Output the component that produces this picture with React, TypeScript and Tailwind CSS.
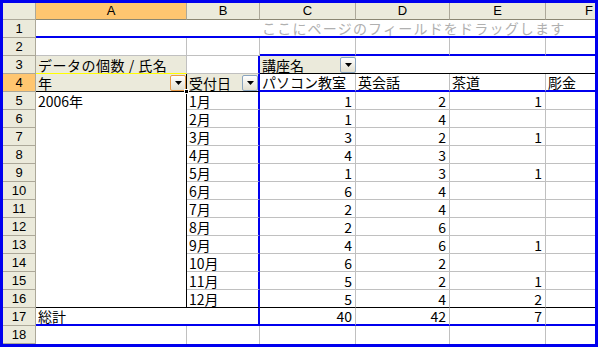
import React from "react";

const R: Record<string, string> = {
  g: "border-r border-r-[#c0c0c0]",
  n: "",
  k: "border-r border-r-black",
  u: "border-r-2 border-r-[#0000ee]",
};
const B: Record<string, string> = {
  g: "border-b border-b-[#c0c0c0]",
  n: "",
  k: "border-b border-b-black",
  u: "border-b-2 border-b-[#0000ee]",
  y: "border-b border-b-[#ffff00]",
};

type CellProps = {
  r?: string;
  b?: string;
  className?: string;
  children?: React.ReactNode;
};

function Cell({ r = "g", b = "g", className = "", children }: CellProps) {
  return (
    <div className={`flex h-full min-w-0 items-center overflow-hidden whitespace-nowrap ${R[r]} ${B[b]} ${className}`}>
      {children}
    </div>
  );
}

function RowHead({ n, active }: { n: number; active?: boolean }) {
  return (
    <div
      className={`flex h-full items-center justify-center border-r border-b border-r-[#aca899] border-b-[#aca899] text-[13px] ${
        active ? "bg-[#ffc670]" : "bg-[#ebeadb]"
      }`}
      style={{ fontFamily: '"Liberation Sans", Arial, sans-serif' }}
    >
      {n}
    </div>
  );
}

function Row({ n, active, children }: { n: number; active?: boolean; children: React.ReactNode }) {
  return (
    <div className="grid h-[18px] grid-cols-[33px_151px_73px_96px_94px_96px_49px]">
      <RowHead n={n} active={active} />
      {children}
    </div>
  );
}

function DropBtn({ hot }: { hot?: boolean }) {
  return (
    <span
      className={`flex h-[16px] w-[16px] shrink-0 items-center justify-center rounded-[2px] border bg-linear-to-b from-[#ffffff] to-[#e2dfd0] ${
        hot ? "border-[#e89a48]" : "border-[#8aa4bf]"
      }`}
    >
      <svg width="7" height="4" viewBox="0 0 7 4">
        <path d="M0 0h7L3.5 4z" fill="#000" />
      </svg>
    </span>
  );
}

const data: [string, number, number, number | null][] = [
  ["1月", 1, 2, 1],
  ["2月", 1, 4, null],
  ["3月", 3, 2, 1],
  ["4月", 4, 3, null],
  ["5月", 1, 3, 1],
  ["6月", 6, 4, null],
  ["7月", 2, 4, null],
  ["8月", 2, 6, null],
  ["9月", 4, 6, 1],
  ["10月", 6, 2, null],
  ["11月", 5, 2, 1],
  ["12月", 5, 4, 2],
];

const headers = ["A", "B", "C", "D", "E"];

export default function App() {
  return (
    <div
      className="h-[347px] w-[598px] overflow-hidden border-[3px] border-[#0000ee] bg-white text-[14px] leading-[16px] text-black"
      style={{ fontFamily: '"Noto Sans CJK JP", "Liberation Sans", sans-serif' }}
    >
      {/* column headers */}
      <div
        className="grid h-[17px] grid-cols-[33px_151px_73px_96px_94px_96px_49px] text-[13px]"
        style={{ fontFamily: '"Liberation Sans", Arial, sans-serif' }}
      >
        <div className="border-r border-b border-r-[#aca899] border-b-[#aca899] bg-[#ebeadb]" />
        {headers.map((h, i) => (
          <div
            key={h}
            className={`flex items-center justify-center border-r border-b border-r-[#aca899] border-b-[#8a8672] ${
              i === 0 ? "bg-[#ffc670]" : "bg-[#ebeadb]"
            }`}
          >
            {h}
          </div>
        ))}
        <div className="flex items-center justify-end overflow-hidden border-b border-b-[#8a8672] bg-[#ebeadb] pr-[2px]">
          F
        </div>
      </div>

      {/* page field area */}
      <Row n={1}>
        <Cell r="n" b="u" />
        <Cell r="n" b="u" />
        <div className="col-span-4 flex h-full items-center overflow-hidden whitespace-nowrap border-b-2 border-b-[#0000ee] pl-[2px] tracking-[1.2px] text-[#b0b0b0]">
          ここにページのフィールドをドラッグします
        </div>
      </Row>

      <Row n={2}>
        <Cell />
        <Cell />
        <Cell b="u" />
        <Cell b="u" />
        <Cell b="u" />
        <Cell r="n" b="u" />
      </Row>

      <Row n={3}>
        <Cell b="y" className="bg-[#ebeadb] pl-[2px] tracking-[0.5px]">
          データの個数 / 氏名
        </Cell>
        <Cell r="u" />
        <Cell r="n" b="k" className="justify-between bg-[#ebeadb] pl-[2px]">
          <span>講座名</span>
          <DropBtn />
        </Cell>
        <Cell r="n" b="k" />
        <Cell r="n" b="k" />
        <Cell r="n" b="k" />
      </Row>

      <Row n={4} active>
        <div className="relative z-10 flex h-full items-center justify-between border-r border-b border-r-black border-b-black bg-[#ebeadb] pl-[2px]">
          <span>年</span>
          <DropBtn hot />
          <span className="absolute -right-[3px] -bottom-[3px] h-[5px] w-[5px] border border-white bg-black" />
        </div>
        <Cell r="u" b="k" className="justify-between bg-[#ebeadb] pl-[2px]">
          <span>受付日</span>
          <DropBtn />
        </Cell>
        <Cell b="u" className="pl-[2px]">パソコン教室</Cell>
        <Cell b="u" className="pl-[2px]">英会話</Cell>
        <Cell b="u" className="pl-[2px]">茶道</Cell>
        <Cell r="n" b="u" className="pl-[2px]">彫金</Cell>
      </Row>

      {data.map(([m, c, d, e], i) => {
        const last = i === data.length - 1;
        const b = last ? "k" : "g";
        return (
          <Row key={m} n={5 + i}>
            <Cell r="k" b={last ? "k" : "n"} className="pl-[2px]">
              {i === 0 ? "2006年" : ""}
            </Cell>
            <Cell r="u" b={b} className="pl-[2px]">
              {m}
            </Cell>
            <Cell b={b} className="justify-end pr-[3px]">
              {c}
            </Cell>
            <Cell b={b} className="justify-end pr-[3px]">
              {d}
            </Cell>
            <Cell b={b} className="justify-end pr-[3px]">
              {e ?? ""}
            </Cell>
            <Cell r="n" b={b} />
          </Row>
        );
      })}

      <Row n={17}>
        <Cell r="n" b="u" className="pl-[2px]">
          総計
        </Cell>
        <Cell r="u" b="u" />
        <Cell b="u" className="justify-end pr-[3px]">
          40
        </Cell>
        <Cell b="u" className="justify-end pr-[3px]">
          42
        </Cell>
        <Cell b="u" className="justify-end pr-[3px]">
          7
        </Cell>
        <Cell r="n" b="u" />
      </Row>

      <Row n={18}>
        <Cell b="n" />
        <Cell b="n" />
        <Cell b="n" />
        <Cell b="n" />
        <Cell b="n" />
        <Cell r="n" b="n" />
      </Row>
    </div>
  );
}
